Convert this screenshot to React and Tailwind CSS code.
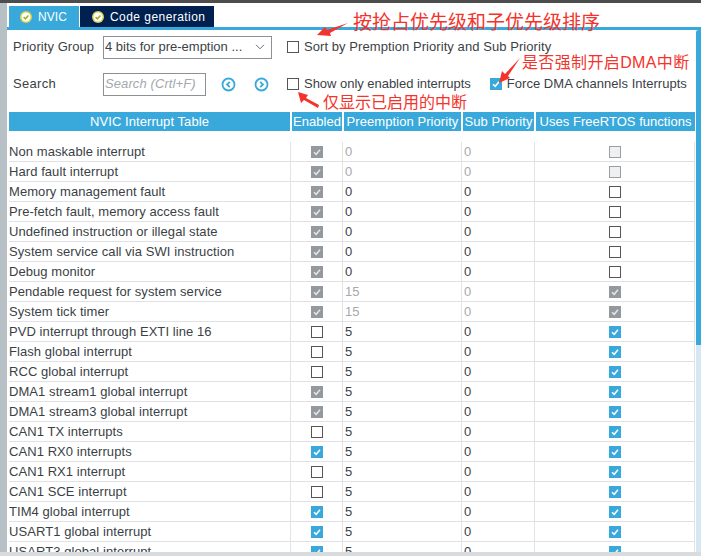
const F = { fontFamily: '"Liberation Sans", Arial, sans-serif' };
const CJK = { fontFamily: '"Liberation Sans", "Noto Sans CJK SC", sans-serif' };

const rows = [
  ["Non maskable interrupt", "g", "0", "d", "0", "d", "x"],
  ["Hard fault interrupt", "g", "0", "d", "0", "d", "x"],
  ["Memory management fault", "g", "0", "", "0", "", "u"],
  ["Pre-fetch fault, memory access fault", "g", "0", "", "0", "", "u"],
  ["Undefined instruction or illegal state", "g", "0", "", "0", "", "u"],
  ["System service call via SWI instruction", "g", "0", "", "0", "", "u"],
  ["Debug monitor", "g", "0", "", "0", "", "u"],
  ["Pendable request for system service", "g", "15", "d", "0", "d", "g"],
  ["System tick timer", "g", "15", "d", "0", "d", "g"],
  ["PVD interrupt through EXTI line 16", "u", "5", "", "0", "", "b"],
  ["Flash global interrupt", "u", "5", "", "0", "", "b"],
  ["RCC global interrupt", "u", "5", "", "0", "", "b"],
  ["DMA1 stream1 global interrupt", "g", "5", "", "0", "", "b"],
  ["DMA1 stream3 global interrupt", "g", "5", "", "0", "", "b"],
  ["CAN1 TX interrupts", "u", "5", "", "0", "", "b"],
  ["CAN1 RX0 interrupts", "b", "5", "", "0", "", "b"],
  ["CAN1 RX1 interrupt", "u", "5", "", "0", "", "b"],
  ["CAN1 SCE interrupt", "u", "5", "", "0", "", "b"],
  ["TIM4 global interrupt", "b", "5", "", "0", "", "b"],
  ["USART1 global interrupt", "b", "5", "", "0", "", "b"],
  ["USART3 global interrupt", "b", "5", "", "0", "", "b"],
];

function Check({ kind }) {
  if (kind === "u") return <span className="block w-3 h-3 border border-[#555555] bg-white" />;
  if (kind === "x") return <span className="block w-3 h-3 border border-[#9a9ea3] bg-[#eff0f2]" />;
  return (
    <span className={"flex items-center justify-center w-3 h-3 " + (kind === "g" ? "bg-[#94999e]" : "bg-[#39a9dc]")}>
      <svg width="10" height="10" viewBox="0 0 10 10" fill="none">
        <path d="M2 5.2 L4.2 7.3 L8 2.8" stroke={kind === "g" ? "#e4e6e8" : "#ffffff"} strokeWidth="1.5" />
      </svg>
    </span>
  );
}

function TabIcon() {
  return (
    <span className="flex items-center justify-center w-3 h-3 rounded-full bg-[#d9d34a]">
      <svg width="12" height="12" viewBox="0 0 12 12" fill="none">
        <circle cx="6" cy="6" r="4.5" fill="#ffffff" />
        <path d="M3.6 6.1 L5.4 7.8 L8.4 4.4" stroke="#a8ab2e" strokeWidth="1.5" />
      </svg>
    </span>
  );
}

function NavIcon({ dir }) {
  return (
    <svg className="block" width="15" height="15" viewBox="0 0 15 15" fill="none">
      <circle cx="7.5" cy="7.5" r="6" stroke="#39a9dc" strokeWidth="1.8" />
      <path d={dir === "l" ? "M8.8 4.8 L6 7.5 L8.8 10.2" : "M6.2 4.8 L9 7.5 L6.2 10.2"} stroke="#39a9dc" strokeWidth="1.8" />
    </svg>
  );
}

function Head({ className, children }) {
  return (
    <div className={"h-[19px] bg-[#39a9dc] text-white flex items-center justify-center whitespace-nowrap overflow-hidden " + className}>
      {children}
    </div>
  );
}

function Arrow({ className, points, w, h }) {
  return (
    <svg className={"absolute " + className} width={w} height={h} viewBox={`0 0 ${w} ${h}`}>
      <polygon points={points} fill="#f4332c" />
    </svg>
  );
}

export default function App() {
  return (
    <div style={F} className="relative w-[701px] h-[556px] overflow-hidden bg-white text-[13px] text-[#3b3f46] tracking-[0.07px]">
      <div className="h-[3px] bg-[#4d4d4d]" />
      <div className="flex h-[549px]">
        <div className="w-[7px] bg-[#b7c0c5]" />
        <div className="flex-1 min-w-0 flex flex-col">
          <div className="h-[3px]" />
          <div className="flex pl-[2px] h-[21px] text-[12px]">
            <div className="w-[70px] bg-[#39a9dc] text-white flex items-center gap-[6px] pl-[11px] tracking-[0.1px]">
              <TabIcon />
              <span>NVIC</span>
            </div>
            <div className="w-[134px] ml-px bg-[#002050] text-white flex items-center gap-[6px] pl-[12px] tracking-[0.45px]">
              <TabIcon />
              <span>Code generation</span>
            </div>
          </div>
          <div className="h-[3px] bg-[#39a9dc]" />
          <div className="flex flex-1 min-h-0">
            <div className="flex-1 min-w-0 flex flex-col">
              <div className="flex items-center h-[24px] mt-[5px] pl-[6px]">
                <span className="w-[90px]">Priority Group</span>
                <div className="w-[169px] h-[23px] border border-[#8d9196] flex items-center justify-between pl-[1px] pr-[6px] tracking-normal">
                  <span>4 bits for pre-emption ...</span>
                  <svg width="10" height="6" viewBox="0 0 10 6" fill="none"><path d="M1 0.8 L5 4.8 L9 0.8" stroke="#6a6e73" strokeWidth="1" /></svg>
                </div>
                <span className="ml-[15px]"><Check kind="u" /></span>
                <span className="ml-[5px]">Sort by Premption Priority and Sub Priority</span>
              </div>
              <div className="flex items-center h-[24px] mt-[13px] pl-[6px]">
                <span className="w-[90px] tracking-[0.3px]">Search</span>
                <div className="w-[103px] h-[23px] border border-[#8d9196] flex items-center pl-[1px] italic text-[#a4a8ac] tracking-[0.1px]">Search (Crtl+F)</div>
                <span className="ml-[15px]"><NavIcon dir="l" /></span>
                <span className="ml-[18px]"><NavIcon dir="r" /></span>
                <span className="ml-[18px]"><Check kind="u" /></span>
                <span className="ml-[5px] tracking-[-0.03px]">Show only enabled interrupts</span>
                <span className="ml-[19px]"><Check kind="b" /></span>
                <span className="ml-[5px] tracking-[0.03px]">Force DMA channels Interrupts</span>
              </div>
              <div className="flex gap-[2px] mt-[16px] pl-[2px] pr-[1px]">
                <Head className="w-[281px]">NVIC Interrupt Table</Head>
                <Head className="w-[50px]">Enabled</Head>
                <Head className="w-[117px]">Preemption Priority</Head>
                <Head className="w-[71px]">Sub Priority</Head>
                <Head className="w-[159px] tracking-[0.03px]">Uses FreeRTOS functions</Head>
              </div>
              <div className="h-[11px]" />
              <div className="flex-1 min-h-0 overflow-hidden pl-[2px] pr-[1px]">
                {rows.map((r) => (
                  <div key={r[0]} className="flex h-[20px] border-b border-[#dfe1e5]">
                    <div className="w-[281px] flex items-center whitespace-nowrap">{r[0]}</div>
                    <div className="w-[52px] border-l border-[#e2e4e8] flex items-center justify-center"><Check kind={r[1]} /></div>
                    <div className={"w-[119px] border-l border-[#e2e4e8] flex items-center pl-[2px] " + (r[3] ? "text-[#a6a9ad]" : "")}>{r[2]}</div>
                    <div className={"w-[73px] border-l border-[#e2e4e8] flex items-center pl-[2px] " + (r[5] ? "text-[#a6a9ad]" : "")}>{r[4]}</div>
                    <div className="w-[161px] border-l border-r border-[#e2e4e8] flex items-center justify-center"><Check kind={r[6]} /></div>
                  </div>
                ))}
              </div>
            </div>
            <div className="w-[5px] flex flex-col bg-[#d6e6f3]">
              <div className="h-[315px] bg-[#39a9dc] rounded-tl-[3px]" />
            </div>
          </div>
        </div>
      </div>
      <div className="h-[4px] bg-[#d8dcdf]" />

      <span style={CJK} className="absolute left-[353px] top-[11px] text-[19px] leading-[24px] tracking-normal text-[#f4332c] whitespace-nowrap">按抢占优先级和子优先级排序</span>
      <span style={CJK} className="absolute left-[522px] top-[53px] text-[16px] leading-[20px] tracking-[0.36px] text-[#f4332c] whitespace-nowrap">是否强制开启DMA中断</span>
      <span style={CJK} className="absolute left-[323px] top-[93px] text-[16px] leading-[20px] tracking-normal text-[#f4332c] whitespace-nowrap">仅显示已启用的中断</span>
      <Arrow className="left-[316px] top-[22px]" w={33} h={16} points="1,13 9,5 11,8 32,1 14,11 15,14" />
      <Arrow className="left-[297px] top-[91px]" w={23} h={18} points="1,1 11,4 9,7 22,14 21,17 7,9 4,12" />
      <Arrow className="left-[498px] top-[57px]" w={23} h={27} points="1,26 4,14 7,17 22,1 10,19 12,21" />
    </div>
  );
}
